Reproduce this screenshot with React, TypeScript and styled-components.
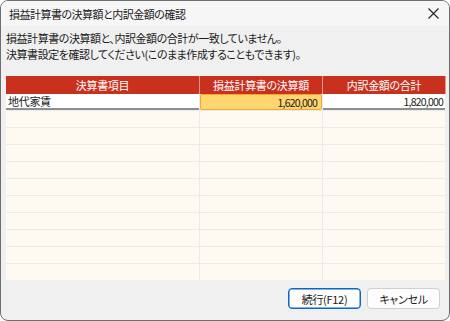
import React from 'react';
import styled, { createGlobalStyle } from 'styled-components';

interface Row {
  item: string,
  pl: string,
  detail: string,
}

const GlobalStyle = createGlobalStyle`
  html, body {
    margin: 0;
    padding: 0;
    background: #ffffff;
  }
  body {
    font-family: "Noto Sans CJK JP", "Noto Sans", sans-serif;
    font-feature-settings: "palt";
    color: #1b1b1b;
  }
`;

const Window = styled.div`
  width: 450px;
  height: 321px;
  box-sizing: border-box;
  border: 1px solid #6e6e6e;
  border-radius: 8px;
  overflow: hidden;
  background: #f0f0f0;
  display: flex;
  flex-direction: column;
`;

const TitleBar = styled.div`
  height: 25px;
  display: flex;
  align-items: center;
  justify-content: space-between;
  padding: 0 8px 0 8px;
  background: #f6f6f6;
  font-size: 11px;
  letter-spacing: -0.5px;
`;

const Close = styled.svg`
  width: 11px;
  height: 11px;
  margin-right: 2px;
`;

const Message = styled.div`
  padding: 4px 5px 0 5px;
  font-size: 11px;
  letter-spacing: -0.45px;
  line-height: 16px;
  height: 46px;
`;

const Table = styled.div`
  margin: 0 4px 0 5px;
  display: grid;
  grid-template-columns: 193px 122px 122px;
  column-gap: 1px;
  row-gap: 1px;
  background: #ebebeb;
`;

const Head = styled.div`
  height: 18px;
  margin-bottom: -1px;
  background: #c9311f;
  color: #ffffff;
  font-size: 11px;
  letter-spacing: -0.3px;
  display: flex;
  align-items: center;
  justify-content: center;
  box-shadow: 1px 0 0 #e39a8e;
`;

const Cell = styled.div<{ $active?: boolean, $hot?: boolean, $num?: boolean, $pad?: number }>`
  height: 16px;
  box-sizing: border-box;
  background: ${p => p.$hot ? '#ffd56f' : p.$active ? '#ffffff' : '#fffaf1'};
  border: ${p => p.$hot ? '1px solid #f3a72c' : 'none'};
  border-bottom: ${p => p.$hot ? '1px solid #f3a72c' : p.$active ? '2px solid #8f8f8f' : 'none'};
  border-radius: ${p => p.$hot ? '2px' : '0'};
  font-size: ${p => p.$num ? '10.5px' : '11px'};
  display: flex;
  align-items: center;
  justify-content: ${p => p.$num ? 'flex-end' : 'flex-start'};
  padding: 0 ${p => p.$pad ?? 0}px 0 ${p => p.$num ? 0 : 2}px;
  letter-spacing: ${p => p.$num ? '-0.8px' : '-0.3px'};
`;

const Footer = styled.div`
  flex: 1;
  display: flex;
  justify-content: flex-end;
  align-items: flex-start;
  gap: 6px;
  padding: 8px 9px 0 0;
`;

const Button = styled.button<{ $primary?: boolean }>`
  width: 73px;
  height: 21px;
  box-sizing: border-box;
  border: 1px solid ${p => p.$primary ? '#0a67c2' : '#d0d0d0'};
  box-shadow: ${p => p.$primary ? 'inset 0 0 0 0.5px #0a67c2' : 'none'};
  border-radius: 4px;
  background: #fdfdfd;
  font-family: "Noto Sans CJK JP", sans-serif;
  font-feature-settings: "palt";
  font-size: 11px;
  letter-spacing: -0.3px;
  color: #1b1b1b;
  padding: 0;
`;

const rows: Row[] = [
  { item: '地代家賃', pl: '1,620,000', detail: '1,820,000' },
  ...Array.from({ length: 10 }, () => ({ item: '', pl: '', detail: '' })),
];

export default function App() {
  return (
    <>
      <GlobalStyle />
      <Window>
        <TitleBar>
          <span>損益計算書の決算額と内訳金額の確認</span>
          <Close viewBox="0 0 11 11">
            <path d="M0.5 0.5 L10.5 10.5 M10.5 0.5 L0.5 10.5" stroke="#222" strokeWidth="1.1" />
          </Close>
        </TitleBar>
        <Message>
          損益計算書の決算額と、内訳金額の合計が一致していません。<br />
          決算書設定を確認してください(このまま作成することもできます)。
        </Message>
        <Table>
          <Head>決算書項目</Head>
          <Head>損益計算書の決算額</Head>
          <Head>内訳金額の合計</Head>
          {rows.map((r, i) => (
            <React.Fragment key={i}>
              <Cell $active={i === 0}>{r.item}</Cell>
              <Cell $hot={i === 0} $num $pad={4}>{r.pl}</Cell>
              <Cell $active={i === 0} $num $pad={2}>{r.detail}</Cell>
            </React.Fragment>
          ))}
        </Table>
        <Footer>
          <Button $primary>続行(F12)</Button>
          <Button>キャンセル</Button>
        </Footer>
      </Window>
    </>
  );
}
